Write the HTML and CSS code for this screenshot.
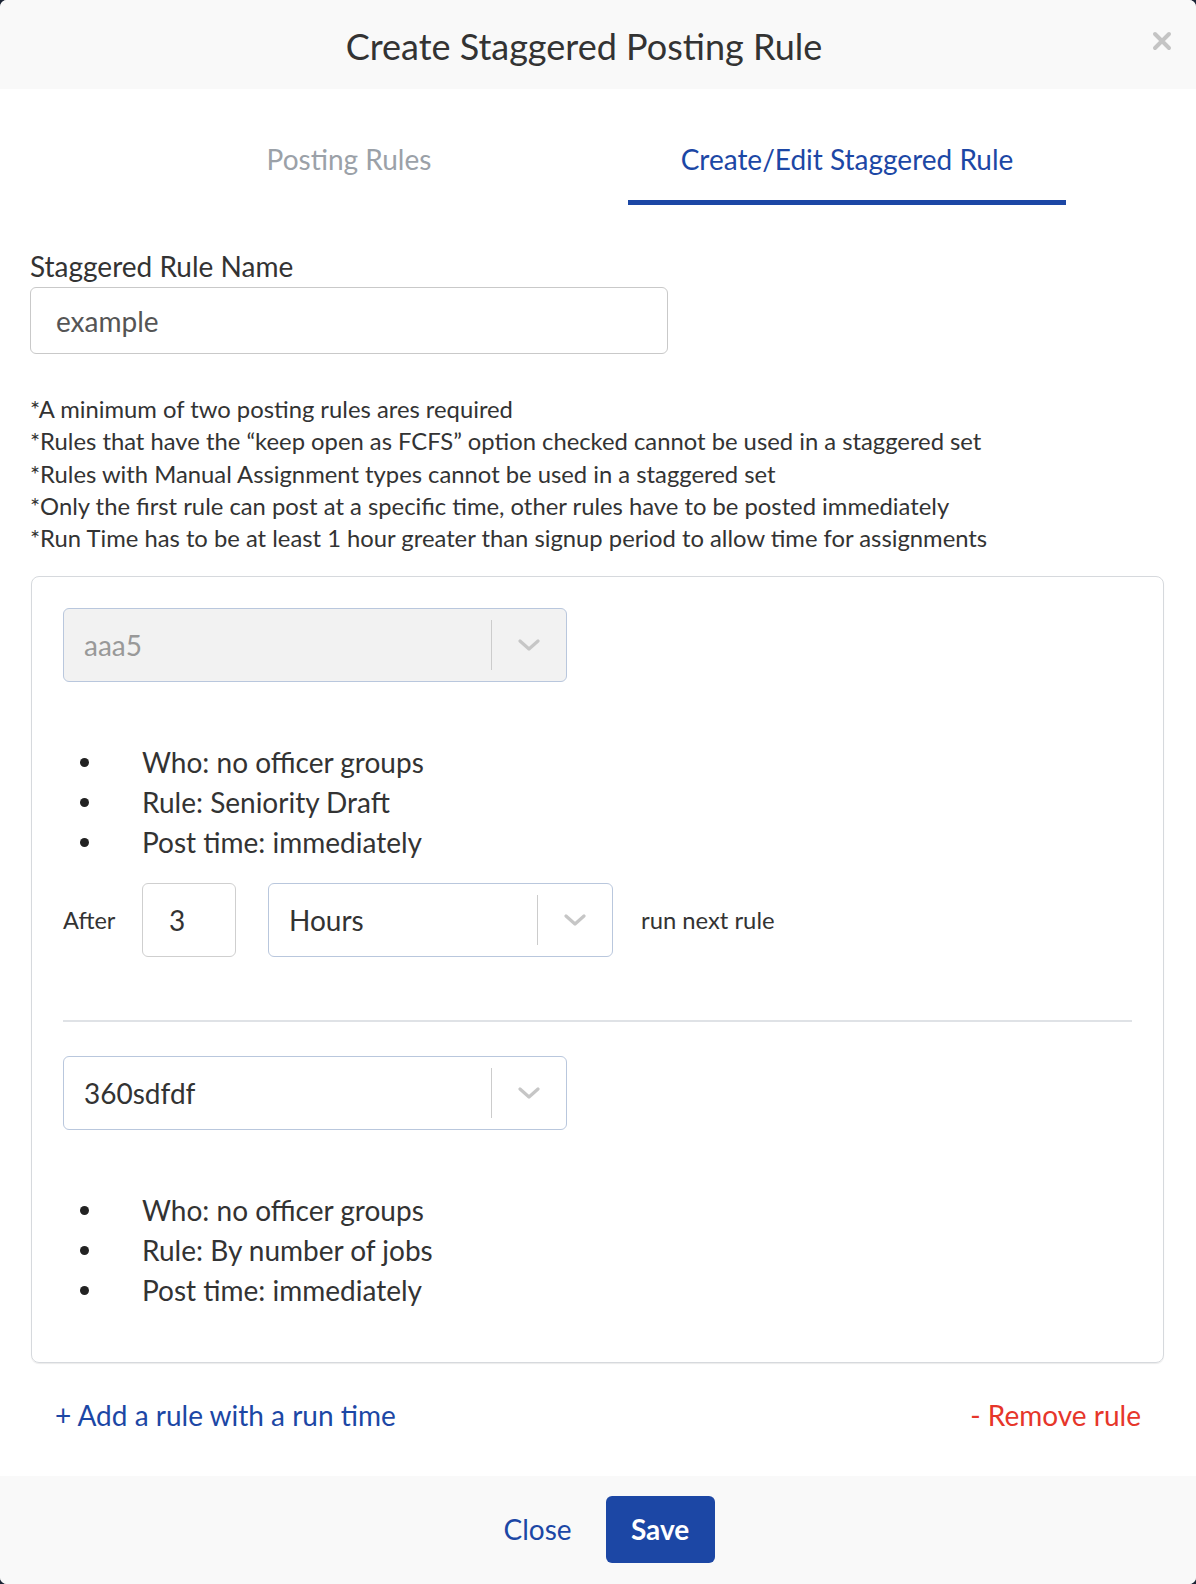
FILE: index.html
```html
<!DOCTYPE html>
<html>
<head>
<meta charset="utf-8">
<link rel="stylesheet" href="styles.css">
</head>
<body>
<div class="modal">
  <div class="modal-header">
    <h1 class="title">Create Staggered Posting Rule</h1>
    <span class="close-x">
      <svg width="20" height="20" viewBox="0 0 20 20"><path d="M3 3 L17 17 M17 3 L3 17" stroke="#c4c4c4" stroke-width="4" stroke-linecap="round"/></svg>
    </span>
  </div>
  <div class="modal-body">
    <div class="tabs">
      <div class="tab">Posting Rules</div>
      <div class="tab active">Create/Edit Staggered Rule</div>
    </div>
    <label class="field-label">Staggered Rule Name</label>
    <div class="text-input">example</div>
    <div class="notes">
      <div>*A minimum of two posting rules ares required</div>
      <div>*Rules that have the “keep open as FCFS” option checked cannot be used in a staggered set</div>
      <div>*Rules with Manual Assignment types cannot be used in a staggered set</div>
      <div>*Only the first rule can post at a specific time, other rules have to be posted immediately</div>
      <div>*Run Time has to be at least 1 hour greater than signup period to allow time for assignments</div>
    </div>
    <div class="card">
      <div class="select disabled">
        <span class="select-value">aaa5</span>
        <span class="select-sep"></span>
        <span class="select-arrow"><svg width="22" height="12" viewBox="0 0 22 12"><path d="M2 2 L11 10 L20 2" fill="none" stroke="#c6c6c6" stroke-width="3.2" stroke-linecap="round" stroke-linejoin="round"/></svg></span>
      </div>
      <ul class="rule-info">
        <li>Who: no officer groups</li>
        <li>Rule: Seniority Draft</li>
        <li>Post time: immediately</li>
      </ul>
      <div class="after-row">
        <span class="after-label">After</span>
        <div class="num-input">3</div>
        <div class="select hours">
          <span class="select-value">Hours</span>
          <span class="select-sep"></span>
          <span class="select-arrow"><svg width="22" height="12" viewBox="0 0 22 12"><path d="M2 2 L11 10 L20 2" fill="none" stroke="#c6c6c6" stroke-width="3.2" stroke-linecap="round" stroke-linejoin="round"/></svg></span>
        </div>
        <span class="after-label next">run next rule</span>
      </div>
      <div class="divider"></div>
      <div class="select second">
        <span class="select-value">360sdfdf</span>
        <span class="select-sep"></span>
        <span class="select-arrow"><svg width="22" height="12" viewBox="0 0 22 12"><path d="M2 2 L11 10 L20 2" fill="none" stroke="#c6c6c6" stroke-width="3.2" stroke-linecap="round" stroke-linejoin="round"/></svg></span>
      </div>
      <ul class="rule-info">
        <li>Who: no officer groups</li>
        <li>Rule: By number of jobs</li>
        <li>Post time: immediately</li>
      </ul>
    </div>
    <div class="links">
      <a class="add-link">+ Add a rule with a run time</a>
      <a class="remove-link">- Remove rule</a>
    </div>
  </div>
  <div class="modal-footer">
    <button class="btn-close">Close</button>
    <button class="btn-save">Save</button>
  </div>
</div>
</body>
</html>
```

FILE: styles.css
```css
html, body {
  margin: 0;
  padding: 0;
  background: #1b2435;
}
body {
  font-family: Lato, "Open Sans", sans-serif;
  color: #333;
}
.modal {
  width: 1196px;
  height: 1584px;
  background: #fff;
  border-radius: 7px;
  overflow: hidden;
  display: flex;
  flex-direction: column;
}
.modal-header {
  height: 89px;
  background: #f9f9f9;
  display: flex;
  align-items: center;
  justify-content: center;
  position: relative;
  flex-shrink: 0;
  padding-right: 28px;
  box-sizing: border-box;
}
.title {
  margin: 0;
  font-size: 36px;
  font-weight: 400;
  color: #333;
  line-height: 40px;
  padding-top: 2px;
}
.close-x {
  position: absolute;
  right: 24px;
  top: 31px;
  width: 20px;
  height: 20px;
}
.close-x svg { display: block; }
.modal-body {
  flex: 1;
  padding: 0 30px;
}
.tabs {
  display: flex;
  gap: 60px;
  padding: 0 100px;
}
.tab {
  flex: 1;
  text-align: center;
  font-size: 28px;
  line-height: 32px;
  padding-top: 54px;
  padding-bottom: 25px;
  border-bottom: 5px solid transparent;
  color: #9ba1a8;
}
.tab.active {
  color: #1c47a5;
  border-bottom-color: #1c47a5;
}
.field-label {
  display: block;
  margin-top: 45px;
  font-size: 28px;
  line-height: 32px;
  color: #333;
}
.text-input {
  margin-top: 5px;
  height: 65px;
  border: 1px solid #c9c9c9;
  border-radius: 6px;
  box-sizing: content-box;
  padding-left: 25px;
  width: 611px;
  display: flex;
  align-items: center;
  font-size: 28px;
  color: #555;
}
.notes {
  margin-top: 39px;
  font-size: 23.8px;
  line-height: 32.3px;
  color: #333;
}
.card {
  margin-top: 22px;
  margin-left: 1px;
  width: 1133px;
  border: 1px solid #d6d9dd;
  border-radius: 8px;
  padding: 31px 31px 52px 31px;
  box-sizing: border-box;
  box-shadow: 0 1px 1px rgba(0,0,0,0.08);
}
.select {
  display: flex;
  align-items: center;
  width: 504px;
  height: 74px;
  border: 1px solid #b9c7dd;
  border-radius: 6px;
  box-sizing: border-box;
  background: #fff;
}
.select.disabled {
  background: #f2f2f2;
}
.select-value {
  flex: 1;
  padding-left: 20px;
  font-size: 28px;
  color: #333;
}
.select.disabled .select-value {
  color: #999;
}
.select-sep {
  width: 1px;
  height: 50px;
  background: #ccc;
}
.select-arrow {
  width: 74px;
  display: flex;
  justify-content: center;
  align-items: center;
}
.select-arrow svg { display: block; }
.rule-info {
  list-style: none;
  margin: 60px 0 0 0;
  padding: 0;
  font-size: 28px;
  line-height: 40px;
  color: #333;
}
.rule-info li {
  position: relative;
  padding-left: 79px;
}
.rule-info li::before {
  content: "";
  position: absolute;
  left: 17px;
  top: 16px;
  width: 9px;
  height: 9px;
  border-radius: 50%;
  background: #222;
}
.after-row {
  display: flex;
  align-items: center;
  margin-top: 21px;
  height: 74px;
}
.after-label {
  font-size: 23.5px;
  color: #333;
  width: 79px;
}
.after-label.next {
  width: auto;
  margin-left: 28px;
  font-size: 23.8px;
}
.num-input {
  width: 94px;
  height: 74px;
  box-sizing: border-box;
  border: 1px solid #cfcfcf;
  border-radius: 6px;
  padding-left: 26px;
  display: flex;
  align-items: center;
  font-size: 28px;
  color: #333;
}
.select.hours {
  width: 345px;
  margin-left: 32px;
}
.divider {
  margin-top: 63px;
  height: 2px;
  background: #dfe2e6;
}
.select.second {
  margin-top: 34px;
}
.links {
  display: flex;
  justify-content: space-between;
  align-items: center;
  padding: 0 25px 0 25px;
  margin-top: 36px;
  font-size: 28px;
  line-height: 32px;
}
.add-link { color: #1c47a5; }
.remove-link { color: #e6362a; }
.modal-footer {
  height: 108px;
  flex-shrink: 0;
  background: #f9f9f9;
  display: flex;
  justify-content: center;
  align-items: center;
  padding-bottom: 2px;
  padding-right: 4px;
  box-sizing: border-box;
}
.btn-close {
  font-family: Lato, "Open Sans", sans-serif;
  font-size: 28px;
  color: #1c47a5;
  background: none;
  border: none;
  padding: 0 26px;
  height: 67px;
}
.btn-save {
  font-family: Lato, "Open Sans", sans-serif;
  font-size: 28px;
  font-weight: 700;
  color: #fff;
  background: #1c47a5;
  border: none;
  border-radius: 6px;
  width: 109px;
  height: 67px;
  margin-left: 8px;
}
```
